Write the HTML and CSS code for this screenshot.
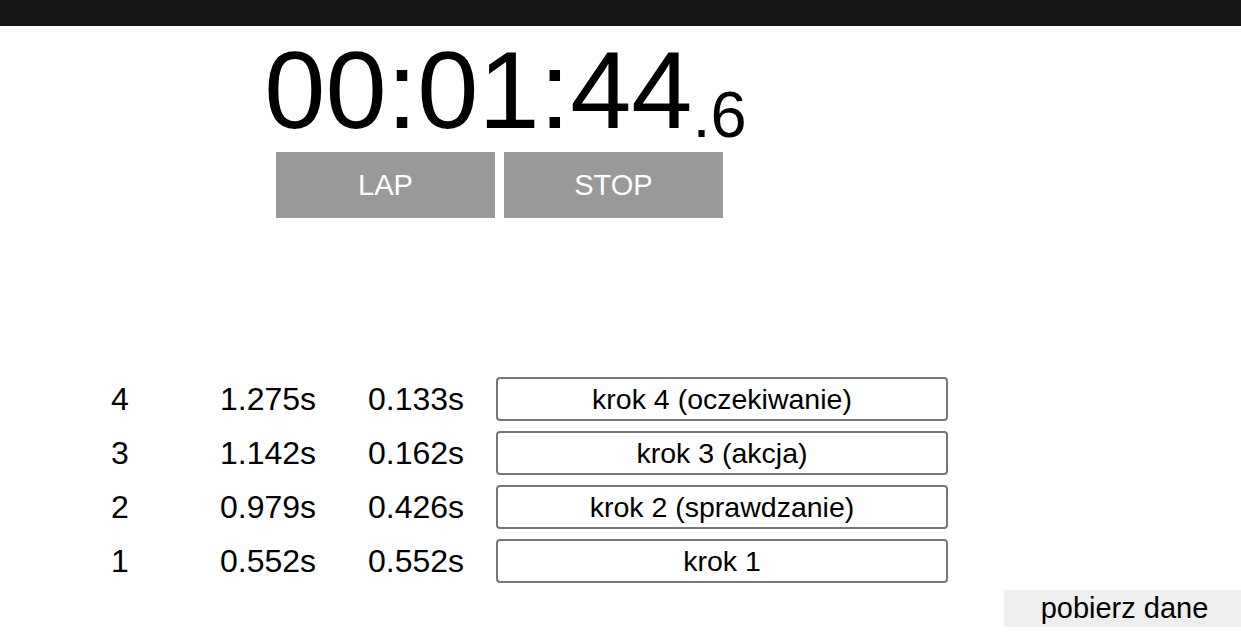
FILE: index.html
```html
<!DOCTYPE html>
<html lang="pl">
<head>
<meta charset="utf-8">
<title>Stoper</title>
<link rel="stylesheet" href="styles.css">
</head>
<body>
<header class="topbar"></header>
<main class="stopwatch">
  <div class="clock"><span class="clock-main">00:01:44</span><span class="clock-tenth">.6</span></div>
  <div class="controls">
    <button class="ctrl">LAP</button>
    <button class="ctrl">STOP</button>
  </div>
</main>
<section class="laps">
  <div class="lap-row">
    <span class="lap-cell">4</span>
    <span class="lap-cell">1.275s</span>
    <span class="lap-cell">0.133s</span>
    <button class="lap-label">krok 4 (oczekiwanie)</button>
  </div>
  <div class="lap-row">
    <span class="lap-cell">3</span>
    <span class="lap-cell">1.142s</span>
    <span class="lap-cell">0.162s</span>
    <button class="lap-label">krok 3 (akcja)</button>
  </div>
  <div class="lap-row">
    <span class="lap-cell">2</span>
    <span class="lap-cell">0.979s</span>
    <span class="lap-cell">0.426s</span>
    <button class="lap-label">krok 2 (sprawdzanie)</button>
  </div>
  <div class="lap-row">
    <span class="lap-cell">1</span>
    <span class="lap-cell">0.552s</span>
    <span class="lap-cell">0.552s</span>
    <button class="lap-label">krok 1</button>
  </div>
</section>
<div class="export">
  <button class="export-btn">pobierz dane</button>
</div>
</body>
</html>
```

FILE: styles.css
```css
html, body {
  margin: 0;
  padding: 0;
  background: #ffffff;
  color: #000000;
  font-family: "Liberation Sans", Arial, sans-serif;
}

.topbar {
  height: 26px;
  background: #161616;
}

.stopwatch {
  width: 999px;
  text-align: center;
}

.clock {
  margin-top: 9px;
  padding-left: 12px;
  font-size: 110px;
  line-height: 1;
  white-space: nowrap;
}

.clock-tenth {
  font-size: 65px;
  line-height: 1;
  vertical-align: -9px;
}

.controls {
  display: flex;
  justify-content: center;
  gap: 9px;
  margin-top: 5px;
}

.ctrl {
  width: 219px;
  height: 66px;
  border: none;
  border-radius: 0;
  background: #999999;
  color: #ffffff;
  font-family: "Liberation Sans", Arial, sans-serif;
  font-size: 29px;
  padding: 0;
}

.laps {
  margin-top: 159px;
  padding-left: 45px;
  display: flex;
  flex-direction: column;
  gap: 10px;
}

.lap-row {
  display: grid;
  grid-template-columns: 148px 148px 148px 452px;
  align-items: center;
  height: 44px;
}

.lap-cell {
  text-align: center;
  font-size: 32px;
  padding-left: 2px;
}

.lap-label {
  margin-left: 7px;
  width: 452px;
  height: 44px;
  border: 2px solid #777777;
  border-radius: 4px;
  background: #ffffff;
  color: #000000;
  font-family: "Liberation Sans", Arial, sans-serif;
  font-size: 28.5px;
  padding: 0;
}

.export {
  display: flex;
  justify-content: flex-end;
  margin-top: 7px;
}

.export-btn {
  width: 237px;
  height: 37px;
  border: none;
  border-radius: 0;
  background: #efefef;
  color: #000000;
  font-family: "Liberation Sans", Arial, sans-serif;
  font-size: 29px;
  padding: 0 0 0 4px;
}
```
